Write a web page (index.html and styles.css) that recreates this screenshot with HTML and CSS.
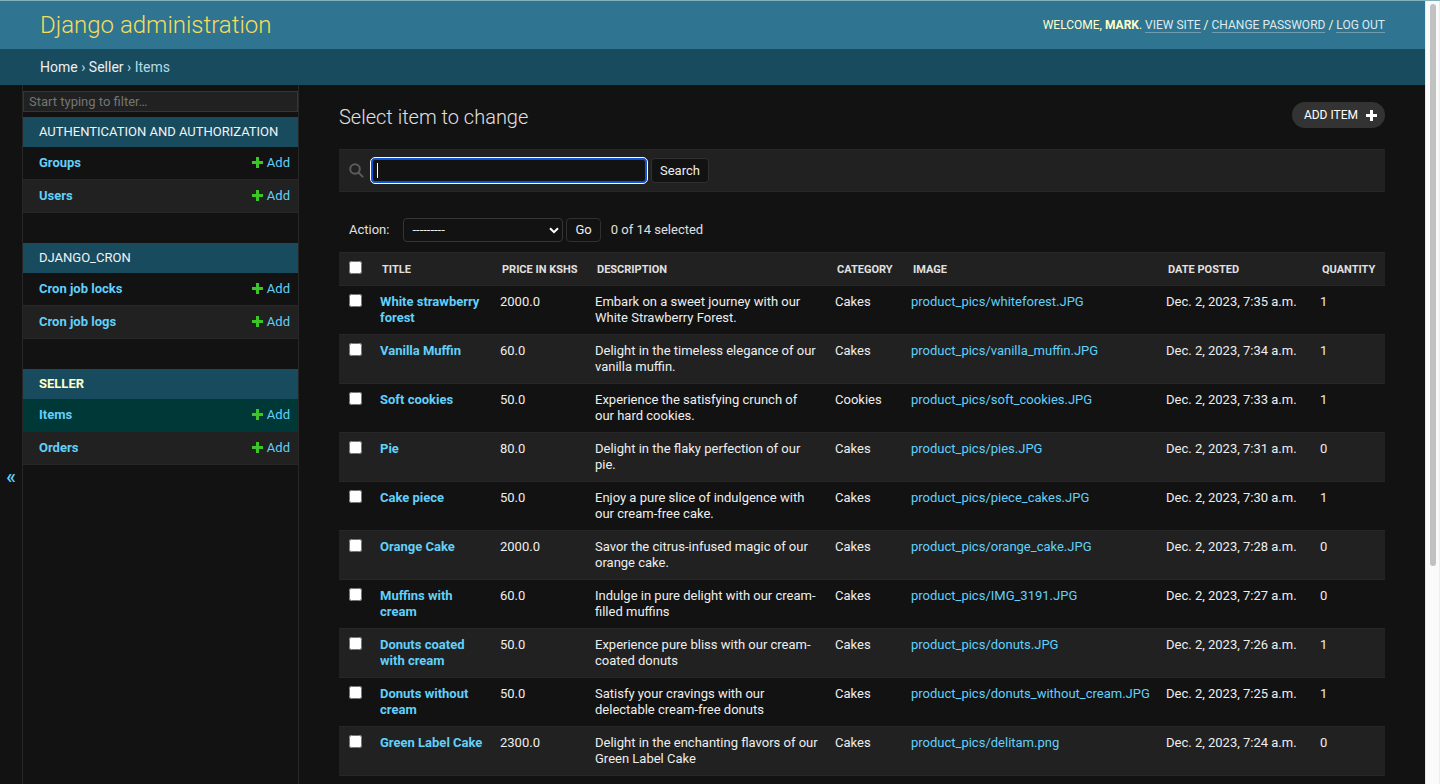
FILE: index.html
```html
<!DOCTYPE html>
<html lang="en">
<head>
<meta charset="utf-8">
<title>Select item to change | Django site admin</title>
<link rel="stylesheet" href="styles.css">
</head>
<body>
<svg class="sprite" aria-hidden="true">
  <symbol id="plus" viewBox="0 0 11 11"><path d="M4 0h3v4h4v3H7v4H4V7H0V4h4z"/></symbol>
</svg>
<div class="window">
  <div class="page">
    <header class="header">
      <h1 class="branding"><a href="#">Django administration</a></h1>
      <div class="user-tools">Welcome, <strong>Mark</strong>. <a href="#">View site</a> / <a href="#">Change password</a> / <a href="#">Log out</a></div>
    </header>
    <nav class="breadcrumbs" aria-label="Breadcrumbs"><a href="#">Home</a> › <a href="#">Seller</a> › Items</nav>
    <div class="main">
      <button class="toggle" type="button" aria-label="Toggle navigation">«</button>
      <nav class="sidebar" aria-label="Sidebar">
        <input class="filter" type="search" placeholder="Start typing to filter…" aria-label="Filter navigation items">
        <section class="app">
          <h2 class="caption"><a href="#">Authentication and Authorization</a></h2>
          <div class="model"><a class="name" href="#">Groups</a><a class="add" href="#"><svg class="plus"><use href="#plus"/></svg>Add</a></div>
          <div class="model alt"><a class="name" href="#">Users</a><a class="add" href="#"><svg class="plus"><use href="#plus"/></svg>Add</a></div>
        </section>
        <section class="app">
          <h2 class="caption"><a href="#">Django_Cron</a></h2>
          <div class="model"><a class="name" href="#">Cron job locks</a><a class="add" href="#"><svg class="plus"><use href="#plus"/></svg>Add</a></div>
          <div class="model alt"><a class="name" href="#">Cron job logs</a><a class="add" href="#"><svg class="plus"><use href="#plus"/></svg>Add</a></div>
        </section>
        <section class="app">
          <h2 class="caption current"><a href="#">Seller</a></h2>
          <div class="model selected"><a class="name" href="#">Items</a><a class="add" href="#"><svg class="plus"><use href="#plus"/></svg>Add</a></div>
          <div class="model alt"><a class="name" href="#">Orders</a><a class="add" href="#"><svg class="plus"><use href="#plus"/></svg>Add</a></div>
        </section>
      </nav>
      <main class="content">
        <div class="title-row">
          <h1 class="title">Select item to change</h1>
          <a class="add-item" href="#">Add item <svg class="plus"><use href="#plus"/></svg></a>
        </div>
        <form class="toolbar">
          <label class="search-label" for="searchbar" aria-label="Search"><svg class="search-icon" viewBox="0 0 15 15"><circle cx="6" cy="6" r="4.8"/><path d="M9.6 9.6l4 4"/></svg></label>
          <span class="search-field"><input id="searchbar" class="search-input" type="text"></span>
          <button class="button" type="button">Search</button>
        </form>
        <form class="actions">
          <label for="action">Action:</label>
          <span class="select-wrap"><select id="action" class="select"><option>---------</option><option>Delete selected items</option></select><svg class="chevron" viewBox="0 0 10 7"><path d="M1 1.2l4 4 4-4"/></svg></span>
          <button class="button go" type="button">Go</button>
          <span class="counter">0 of 14 selected</span>
        </form>
        <table class="results">
          <colgroup><col class="c-check"><col class="c-title"><col class="c-price"><col class="c-desc"><col class="c-cat"><col class="c-image"><col class="c-date"><col class="c-qty"></colgroup>
          <thead>
            <tr><th class="check"><input type="checkbox" aria-label="Select all"></th><th>Title</th><th>Price in kshs</th><th>Description</th><th>Category</th><th>Image</th><th>Date posted</th><th>Quantity</th></tr>
          </thead>
          <tbody>
            <tr><td class="check"><input type="checkbox" aria-label="Select White strawberry forest"></td><th scope="row"><a href="#">White strawberry forest</a></th><td>2000.0</td><td>Embark on a sweet journey with our White Strawberry Forest.</td><td>Cakes</td><td><a href="#">product_pics/whiteforest.JPG</a></td><td class="date">Dec. 2, 2023, 7:35 a.m.</td><td>1</td></tr>
            <tr><td class="check"><input type="checkbox" aria-label="Select Vanilla Muffin"></td><th scope="row"><a href="#">Vanilla Muffin</a></th><td>60.0</td><td>Delight in the timeless elegance of our vanilla muffin.</td><td>Cakes</td><td><a href="#">product_pics/vanilla_muffin.JPG</a></td><td class="date">Dec. 2, 2023, 7:34 a.m.</td><td>1</td></tr>
            <tr><td class="check"><input type="checkbox" aria-label="Select Soft cookies"></td><th scope="row"><a href="#">Soft cookies</a></th><td>50.0</td><td>Experience the satisfying crunch of our hard cookies.</td><td>Cookies</td><td><a href="#">product_pics/soft_cookies.JPG</a></td><td class="date">Dec. 2, 2023, 7:33 a.m.</td><td>1</td></tr>
            <tr><td class="check"><input type="checkbox" aria-label="Select Pie"></td><th scope="row"><a href="#">Pie</a></th><td>80.0</td><td>Delight in the flaky perfection of our pie.</td><td>Cakes</td><td><a href="#">product_pics/pies.JPG</a></td><td class="date">Dec. 2, 2023, 7:31 a.m.</td><td>0</td></tr>
            <tr><td class="check"><input type="checkbox" aria-label="Select Cake piece"></td><th scope="row"><a href="#">Cake piece</a></th><td>50.0</td><td>Enjoy a pure slice of indulgence with our cream-free cake.</td><td>Cakes</td><td><a href="#">product_pics/piece_cakes.JPG</a></td><td class="date">Dec. 2, 2023, 7:30 a.m.</td><td>1</td></tr>
            <tr><td class="check"><input type="checkbox" aria-label="Select Orange Cake"></td><th scope="row"><a href="#">Orange Cake</a></th><td>2000.0</td><td>Savor the citrus-infused magic of our orange cake.</td><td>Cakes</td><td><a href="#">product_pics/orange_cake.JPG</a></td><td class="date">Dec. 2, 2023, 7:28 a.m.</td><td>0</td></tr>
            <tr><td class="check"><input type="checkbox" aria-label="Select Muffins with cream"></td><th scope="row"><a href="#">Muffins with cream</a></th><td>60.0</td><td>Indulge in pure delight with our cream-filled muffins</td><td>Cakes</td><td><a href="#">product_pics/IMG_3191.JPG</a></td><td class="date">Dec. 2, 2023, 7:27 a.m.</td><td>0</td></tr>
            <tr><td class="check"><input type="checkbox" aria-label="Select Donuts coated with cream"></td><th scope="row"><a href="#">Donuts coated with cream</a></th><td>50.0</td><td>Experience pure bliss with our cream-coated donuts</td><td>Cakes</td><td><a href="#">product_pics/donuts.JPG</a></td><td class="date">Dec. 2, 2023, 7:26 a.m.</td><td>1</td></tr>
            <tr><td class="check"><input type="checkbox" aria-label="Select Donuts without cream"></td><th scope="row"><a href="#">Donuts without cream</a></th><td>50.0</td><td>Satisfy your cravings with our delectable cream-free donuts</td><td>Cakes</td><td><a href="#">product_pics/donuts_without_cream.JPG</a></td><td class="date">Dec. 2, 2023, 7:25 a.m.</td><td>1</td></tr>
            <tr><td class="check"><input type="checkbox" aria-label="Select Green Label Cake"></td><th scope="row"><a href="#">Green Label Cake</a></th><td>2300.0</td><td>Delight in the enchanting flavors of our Green Label Cake</td><td>Cakes</td><td><a href="#">product_pics/delitam.png</a></td><td class="date">Dec. 2, 2023, 7:24 a.m.</td><td>0</td></tr>
          </tbody>
        </table>
      </main>
    </div>
  </div>
  <div class="scrollbar" aria-hidden="true"><div class="thumb"></div></div>
</div>
</body>
</html>
```
FILE: styles.css
```css
:root {
  --bg: #121212;
  --alt: #212121;
  --line: #272727;
  --border: #353535;
  --text: #eeeeee;
  --quiet: #e0e0e0;
  --link: #61d0fa;
  --primary: #2f7591;
  --secondary: #194b5e;
  --accent: #f5dd5d;
  --green: #3cc428;
}

* { box-sizing: border-box; }

body {
  margin: 0;
  background: var(--bg);
  color: var(--text);
  font: 13px/16px Roboto, "Liberation Sans", sans-serif;
}

a { color: var(--link); text-decoration: none; }

input, button, select { font: inherit; }

.sprite { display: none; }

.window {
  display: flex;
  height: 100vh;
  overflow: hidden;
  border-top: 1px solid #80b2b8;
}

.page {
  flex: 1;
  min-width: 0;
  display: flex;
  flex-direction: column;
}

.header {
  display: flex;
  flex: none;
  align-items: center;
  justify-content: space-between;
  padding: 9px 40px;
  background: var(--primary);
  color: #ffffcc;
}

.branding { margin: 0; font-size: 24px; line-height: 30px; font-weight: 300; }
.branding a { color: var(--accent); }

.user-tools { font-size: 12px; line-height: 14px; text-transform: uppercase; }
.user-tools a { color: #dfeaef; border-bottom: 1px solid #6d9eb2; }

.breadcrumbs {
  flex: none;
  padding: 10px 40px;
  background: var(--secondary);
  color: #b5dbe8;
  font-size: 14px;
}
.breadcrumbs a { color: var(--text); }

.main { display: flex; flex: 1; min-height: 0; }

.toggle {
  flex: none;
  width: 23px;
  padding: 82px 0 0;
  border: 0;
  border-right: 1px solid var(--line);
  background: var(--bg);
  color: var(--link);
  font-size: 20px;
  font-weight: 500;
}

.sidebar {
  flex: none;
  width: 276px;
  padding-top: 6px;
  border-right: 1px solid var(--line);
}

.filter {
  appearance: none;
  display: block;
  width: 100%;
  height: 21px;
  margin: 0 0 5px;
  padding: 0 5px;
  border: 1px solid var(--border);
  background: var(--alt);
  color: var(--text);
}
.filter::placeholder { color: #757575; }

.app { margin-bottom: 30px; }

.caption {
  margin: 0;
  padding: 7px 16px;
  background: var(--secondary);
  font-size: 13px;
  font-weight: 400;
  text-transform: uppercase;
}
.caption a { color: #f0f4f6; }
.current { font-weight: 700; }
.current a { color: #ffffcc; }

.model {
  display: flex;
  justify-content: space-between;
  padding: 8px 8px 8px 16px;
  border-bottom: 1px solid var(--line);
}
.alt { background: var(--alt); }
.selected { background: #003838; }
.name { font-weight: 700; }
.add { display: flex; gap: 4px; }
.plus { width: 11px; height: 11px; margin: 2px 0; fill: var(--green); }

.content { flex: 1; min-width: 0; padding: 17px 40px 0; }

.title-row { display: flex; justify-content: space-between; margin-bottom: 21px; }
.title { margin: 0; padding-top: 4px; font-size: 20px; line-height: 22px; font-weight: 300; color: var(--quiet); }

.add-item {
  display: flex;
  align-items: center;
  gap: 8px;
  height: 26px;
  padding: 0 8px 0 12px;
  border-radius: 15px;
  background: #333333;
  color: #ffffff;
  font-size: 12px;
  text-transform: uppercase;
}
.add-item .plus { fill: #ffffff; }

.toolbar {
  display: flex;
  align-items: center;
  gap: 3px;
  padding: 7px 10px;
  background: var(--alt);
  border: 1px solid var(--line);
  border-left: 0;
  border-right: 0;
}
.search-label { display: flex; margin-right: 3px; }
.search-icon { width: 15px; height: 15px; fill: none; stroke: #5c5c5c; stroke-width: 2; stroke-linecap: round; }
.search-field { position: relative; display: flex; }
.search-field::after {
  content: "";
  position: absolute;
  left: 7px;
  top: 6px;
  width: 1px;
  height: 15px;
  background: #ffffff;
}
.search-input {
  width: 278px;
  height: 27px;
  padding: 0 6px;
  border: 1px solid #ffffff;
  border-radius: 5px;
  outline: none;
  box-shadow: inset 0 0 0 2px #0f54d8;
  background: var(--bg);
  color: var(--text);
  caret-color: transparent;
}
.button {
  height: 25px;
  padding: 0 8px;
  border: 1px solid #303030;
  border-radius: 4px;
  background: var(--bg);
  color: var(--text);
}

.actions {
  display: flex;
  align-items: center;
  padding: 26px 10px 10px;
  color: var(--quiet);
}
.select-wrap { position: relative; display: flex; margin: 0 3px 0 14px; }
.select {
  appearance: none;
  width: 160px;
  height: 24px;
  padding: 0 8px;
  border: 1px solid var(--border);
  border-radius: 4px;
  background: var(--bg);
  color: var(--text);
}
.chevron { position: absolute; right: 4px; top: 9px; width: 10px; height: 7px; fill: none; stroke: #ffffff; stroke-width: 2; pointer-events: none; }
.go { height: 24px; }
.counter { margin-left: 10px; }

.results { width: 100%; table-layout: fixed; border-collapse: collapse; }
.c-check { width: 33px; }
.c-title { width: 120px; }
.c-price { width: 95px; }
.c-desc { width: 240px; }
.c-cat { width: 76px; }
.c-date { width: 154px; }
.c-qty { width: 73px; }

th, td {
  padding: 8px;
  border-bottom: 1px solid var(--line);
  text-align: left;
  vertical-align: top;
}
thead th {
  padding: 9px 10px 7px;
  border-top: 1px solid var(--line);
  background: var(--alt);
  color: var(--quiet);
  font-size: 11px;
  text-transform: uppercase;
  white-space: nowrap;
}
tbody tr:nth-child(even) { background: var(--alt); }
td.check, thead .check { padding: 8px 0 0 10px; }
.check input { display: block; width: 13px; height: 13px; margin: 0; }
.date { white-space: nowrap; }

.scrollbar {
  flex: none;
  width: 15px;
  padding: 3px 3px 0 4px;
  border-left: 1px solid #e8e8e8;
  border-right: 1px solid #ededed;
  background: #fafafa;
}
.thumb { height: 72%; border-radius: 4px; background: #c1c1c1; }
```
